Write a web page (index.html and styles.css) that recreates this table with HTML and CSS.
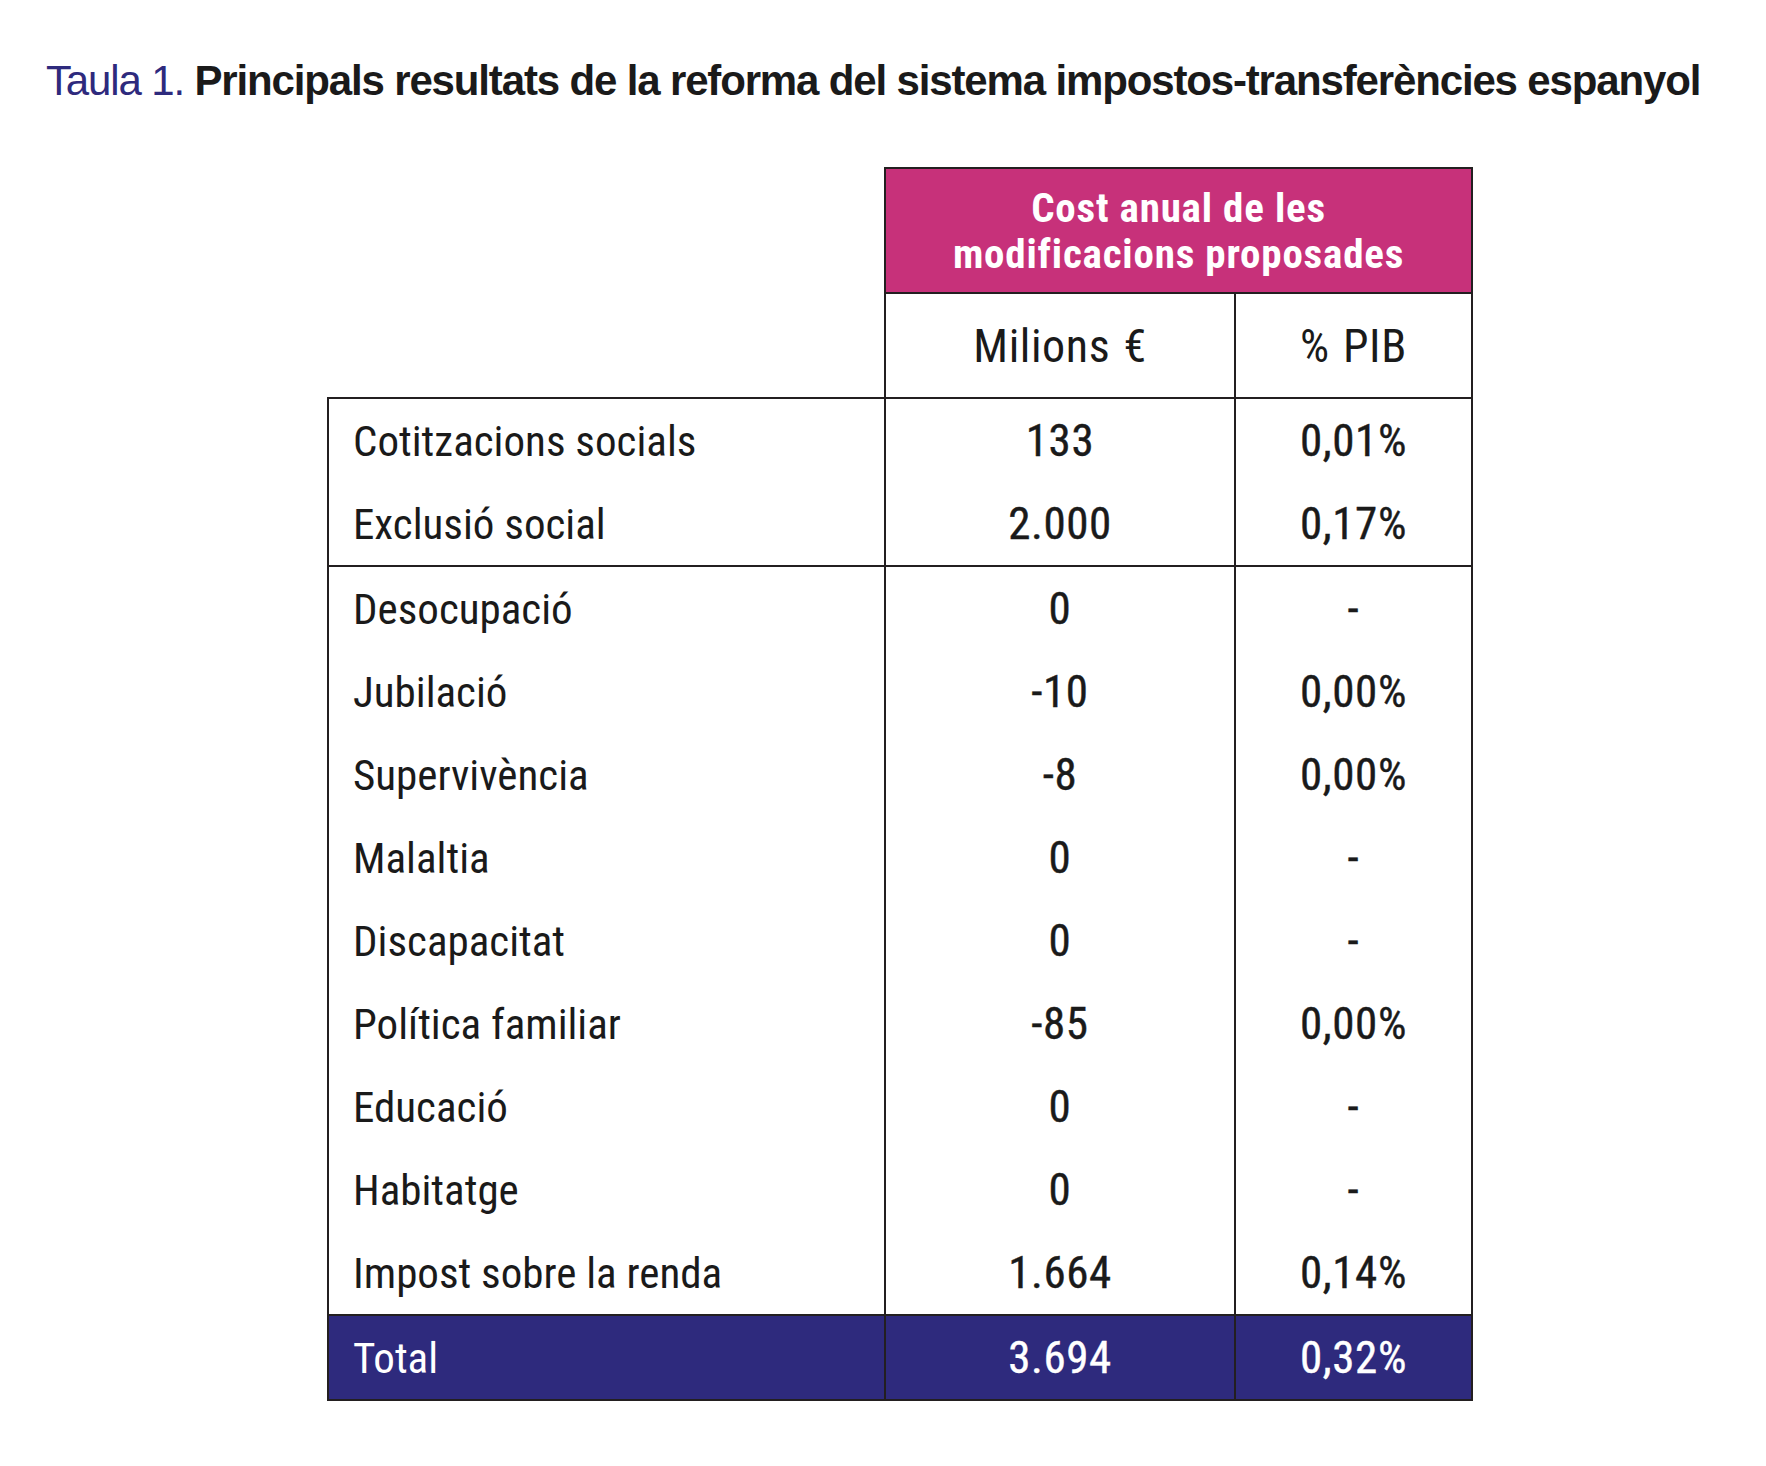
FILE: index.html
```html
<!DOCTYPE html>
<html lang="ca">
<head>
<meta charset="utf-8">
<title>Taula 1</title>
<link rel="stylesheet" href="styles.css">
</head>
<body>
<h1 class="title"><span class="title-num">Taula 1.</span> <span class="title-text">Principals resultats de la reforma del sistema impostos-transferències espanyol</span></h1>
<table class="results">
  <colgroup>
    <col class="c-label">
    <col class="c-mil">
    <col class="c-pib">
  </colgroup>
  <thead>
    <tr class="h-top">
      <th class="blank"></th>
      <th class="pink" colspan="2">Cost anual de les<br>modificacions proposades</th>
    </tr>
    <tr class="h-sub">
      <th class="blank"></th>
      <th class="sub">Milions €</th>
      <th class="sub">% PIB</th>
    </tr>
  </thead>
  <tbody>
    <tr class="first"><td class="lbl">Cotitzacions socials</td><td class="num">133</td><td class="num">0,01%</td></tr>
    <tr class="grp-end"><td class="lbl">Exclusió social</td><td class="num">2.000</td><td class="num">0,17%</td></tr>
    <tr><td class="lbl">Desocupació</td><td class="num">0</td><td class="num">-</td></tr>
    <tr><td class="lbl">Jubilació</td><td class="num">-10</td><td class="num">0,00%</td></tr>
    <tr><td class="lbl">Supervivència</td><td class="num">-8</td><td class="num">0,00%</td></tr>
    <tr><td class="lbl">Malaltia</td><td class="num">0</td><td class="num">-</td></tr>
    <tr><td class="lbl">Discapacitat</td><td class="num">0</td><td class="num">-</td></tr>
    <tr><td class="lbl">Política familiar</td><td class="num">-85</td><td class="num">0,00%</td></tr>
    <tr><td class="lbl">Educació</td><td class="num">0</td><td class="num">-</td></tr>
    <tr><td class="lbl">Habitatge</td><td class="num">0</td><td class="num">-</td></tr>
    <tr><td class="lbl">Impost sobre la renda</td><td class="num">1.664</td><td class="num">0,14%</td></tr>
    <tr class="total"><td class="lbl">Total</td><td class="num">3.694</td><td class="num">0,32%</td></tr>
  </tbody>
</table>
</body>
</html>
```
FILE: styles.css
```css
html, body {
  margin: 0;
  padding: 0;
  background: #ffffff;
}

body {
  color: #1a1a1a;
}

.title {
  margin: 0;
  padding: 56px 0 0 46px;
  font-family: "Liberation Sans", Arial, sans-serif;
  font-size: 42px;
  line-height: 50px;
  letter-spacing: -1.15px;
  white-space: nowrap;
}

.title-num {
  color: #2e2a7d;
  font-weight: normal;
}

.title-text {
  color: #1a1a1a;
  font-weight: bold;
}

.results {
  margin: 61px 0 0 327px;
  border-collapse: collapse;
  table-layout: fixed;
  width: 1144px;
  font-family: "Roboto Condensed", "DejaVu Sans Condensed", "Liberation Sans", sans-serif;
}

.c-label { width: 557px; }
.c-mil { width: 350px; }
.c-pib { width: 237px; }

.results th,
.results td {
  padding: 0;
}

.blank {
  border: none;
}

.pink {
  background: #c7317a;
  color: #ffffff;
  border: 2px solid #231f20;
  height: 123px;
  font-size: 41px;
  line-height: 46px;
  font-weight: bold;
  text-align: center;
  letter-spacing: 0.8px;
}

.sub {
  height: 103px;
  font-size: 46px;
  font-weight: normal;
  text-align: center;
  border: 2px solid #231f20;
  border-top: none;
  letter-spacing: 0.6px;
  word-spacing: 2px;
}

.results td {
  height: 83px;
  font-size: 43px;
  letter-spacing: 0;
  border-left: 2px solid #231f20;
  border-right: 2px solid #231f20;
}

.lbl {
  padding-left: 24px !important;
  text-align: left;
}

.results td.num {
  text-align: center;
  font-size: 45px;
  font-weight: 400;
  letter-spacing: 0.6px;
  -webkit-text-stroke: 0.4px currentColor;
}

.first td {
  border-top: 2px solid #231f20;
}

.grp-end td {
  border-bottom: 2px solid #231f20;
}

.total td {
  background: #2e2a7d;
  color: #ffffff;
  border-top: 2px solid #231f20;
  border-bottom: 2px solid #231f20;
}
```
